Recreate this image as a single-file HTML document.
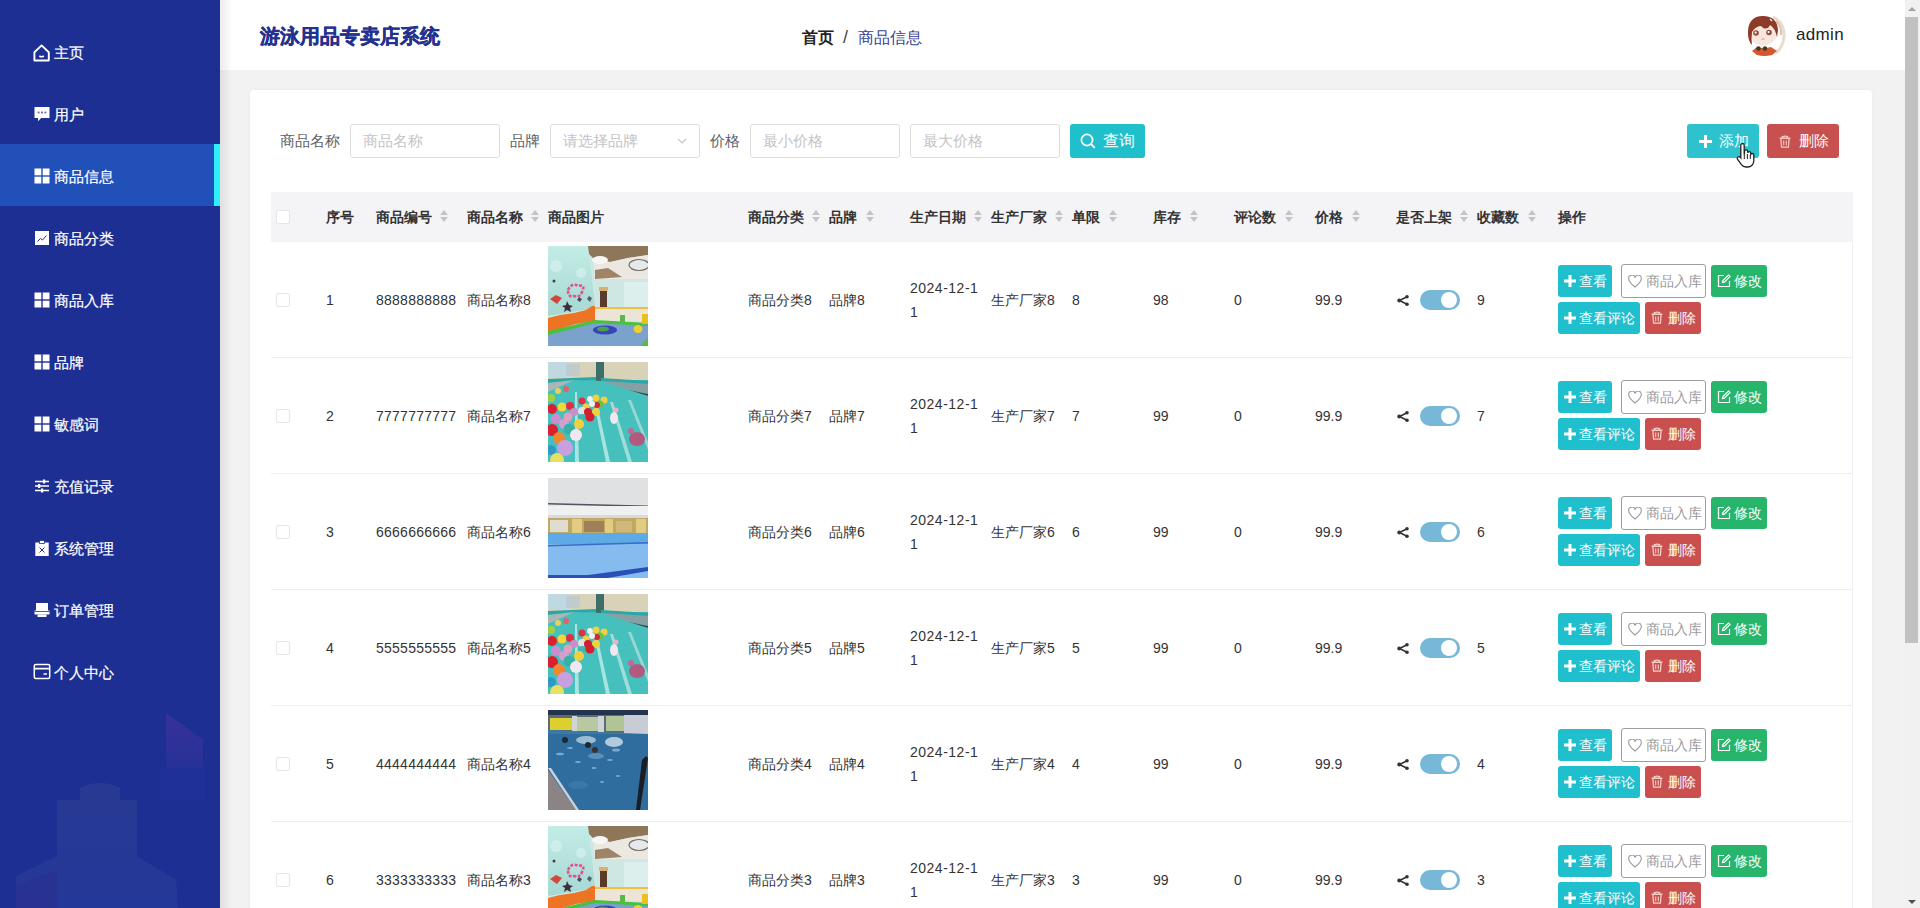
<!DOCTYPE html>
<html><head><meta charset="utf-8"><title>商品信息</title>
<style>
html,body{margin:0;padding:0}
body{width:1920px;height:908px;overflow:hidden;position:relative;background:#f2f2f3;font-family:"Liberation Sans",sans-serif;color:#333}
.main-bg{position:absolute;left:220px;top:70px;width:1685px;height:838px;background:#f2f2f3}
.sidebar{position:absolute;left:0;top:0;width:220px;height:908px;background:#1e2f94;overflow:hidden}
.deco{position:absolute;left:0;top:650px}
.mi{position:absolute;left:0;width:220px;height:62px;color:#fff;font-size:15px}
.mi.active{background:#2250b9}
.mi.active:after{content:"";position:absolute;right:0;top:0;width:6px;height:62px;background:#2ef0fb}
.mico{position:absolute;left:33px;top:23px;width:18px;height:18px}
.mico svg{display:block}
.mt{position:absolute;left:54px;top:22px;line-height:22px;white-space:nowrap;-webkit-text-stroke:.2px #fff}
.header{position:absolute;left:220px;top:0;width:1685px;height:70px;background:#fff}
.header:before{content:"";position:absolute;left:0;top:0;width:12px;height:908px;background:linear-gradient(90deg,rgba(0,0,0,.08),rgba(0,0,0,0))}
.title{position:absolute;left:40px;top:22px;font-size:20px;font-weight:bold;color:#24318f;-webkit-text-stroke:.4px #24318f;line-height:28px;white-space:nowrap}
.crumb{position:absolute;left:582px;top:26px;font-size:16px;line-height:24px;white-space:nowrap;color:#303133}
.crumb b{color:#222}
.crumb .sep{margin:0 10px 0 9px;color:#444;display:inline-block;font-size:18px;vertical-align:top;line-height:23px}
.crumb .cur{color:#3a3f96}
.avatar{position:absolute;left:1523px;top:13px}
.uname{position:absolute;left:1576px;top:24px;font-size:17px;line-height:22px;color:#222;letter-spacing:.35px}
.card{position:absolute;left:250px;top:90px;width:1622px;height:900px;background:#fff;border-radius:4px;box-shadow:0 0 6px rgba(0,0,0,.03)}
.lbl{position:absolute;top:40px;font-size:15px;line-height:22px;color:#606266;white-space:nowrap}
.inp{position:absolute;top:34px;height:32px;border:1px solid #dddddd;border-radius:3px;font-size:15px;line-height:32px;color:#c4c4c6;padding-left:12px;box-sizing:content-box;white-space:nowrap;width:136px}
.sel .arr{position:absolute;right:12px;top:13px}
.sbtn{position:absolute;top:34px;width:75px;height:34px;background:#1fbfcb;border-radius:3px;color:#fff;font-size:16px;line-height:34px;box-sizing:border-box;padding-left:33px;white-space:nowrap}
.sbtn svg{position:absolute;left:10px;top:9px}
.abtn{position:absolute;top:34px;width:72px;height:34px;border-radius:3px;color:#fff;font-size:15px;line-height:34px;box-sizing:border-box;padding-left:32px;white-space:nowrap}
.abtn svg{position:absolute;left:12px;top:11px}
.teal2{background:#2ec2ce}
.red2{background:#c8504e}
.table{position:absolute;left:271px;top:192px;width:1582px;height:716px}
.thead{position:absolute;left:-271px;top:0;width:1853px;height:50px;background:transparent}
.thead:before{content:"";position:absolute;left:271px;top:0;width:1582px;height:50px;background:#f4f4f6}
.h{position:absolute;top:14px;font-size:14px;font-weight:bold;line-height:22px;color:#333;white-space:nowrap}
.sort{position:absolute;top:18px;width:8px;height:14px}
.sort i{position:absolute;left:0;width:0;height:0;border-left:4px solid transparent;border-right:4px solid transparent}
.sort .up{top:0;border-bottom:5px solid #c4c4c8}
.sort .dn{top:7px;border-top:5px solid #c4c4c8}
.cb{position:absolute;width:12px;height:12px;border:1px solid #e4e6ea;background:#fff;border-radius:2px}
.row{position:absolute;left:-271px;width:1853px;height:116px}
.row .c{position:absolute;top:47px;font-size:14px;line-height:22px;color:#333;white-space:nowrap}
.row .date{top:34px;line-height:24px;letter-spacing:.5px}
.row .num{letter-spacing:.25px}
.pic{position:absolute;top:4px;width:100px;height:100px}
.pic{overflow:hidden}.pic svg{display:block;filter:blur(.5px)}
.bd{position:absolute;left:271px;top:115px;width:1582px;height:1px;background:#ebeef5}
.share{position:absolute}
.tg{position:absolute;width:40px;height:20px;border-radius:10px;background:#77b8d8}
.tg i{position:absolute;right:3px;top:2px;width:16px;height:16px;border-radius:50%;background:#fff}
.btn{position:absolute;height:32px;border-radius:3px;font-size:14px;line-height:32px;color:#fff;box-sizing:border-box;padding-left:21px;white-space:nowrap}
.btn .ico{position:absolute;left:6px;top:10px}
.teal{background:#1fbfce}
.green{background:#27b56c;padding-left:23px}
.red{background:#c9504e;padding-left:23px}
.outl{height:34px;line-height:32px;border:1px solid #9d9d9d;color:#9a9a9a;background:#fff;padding-left:24px}
.outl .ico{left:6px;top:10px}
.green .ico{left:6px;top:9px}
.red .ico{left:6px;top:9px}
.cursor{position:absolute;left:1736px;top:142px}
.sb{position:absolute;left:1905px;top:0;width:15px;height:908px;background:#f1f1f1}
.thumb{position:absolute;left:0px;top:17px;width:13px;height:626px;background:#c1c1c1}
.sbup{position:absolute;left:3px;top:7px}
.sbdn{position:absolute;left:3px;top:900px}

.vline{position:absolute;left:1852px;top:242px;width:1px;height:666px;background:#ebeef5}

</style></head><body>
<div class="main-bg"></div>
<div class="sidebar">
<svg class="deco" width="220" height="258" viewBox="0 0 220 258"><defs><linearGradient id="fg" x1="0" y1="0" x2="0" y2="1"><stop offset="0" stop-color="#43329e"/><stop offset="1" stop-color="#2a3396"/></linearGradient><linearGradient id="bg2" x1="0" y1="0" x2="0" y2="1"><stop offset="0" stop-color="#2a3c92"/><stop offset="1" stop-color="#263a9a"/></linearGradient></defs><path d="M80 150 L80 138 Q100 128 120 138 L120 150 L137 150 L137 206 L176 230 L178 258 L16 258 L16 226 L57 206 L57 150 Z" fill="url(#bg2)" opacity=".8"/><path d="M16 236 L57 220 L57 258 L16 258Z" fill="#2c2c8c" opacity=".5"/><path d="M166 63 L203 90 L203 118 L166 118 Z" fill="url(#fg)" opacity=".7"/><path d="M160 118 L205 118 L205 150 L160 150 Z" fill="#2236a0" opacity=".35"/></svg>
<div class="mi" style="top:20px"><span class="mico"><svg width="18" height="19" viewBox="0 0 18 19"><path d="M1.4 9.2L8.6 2.4l7.2 6.8V17.5H1.4z" stroke="#fff" stroke-width="1.9" fill="none" stroke-linejoin="round"/><path d="M6.3 13q2.3 1.5 4.6 0" stroke="#fff" stroke-width="1.7" fill="none"/></svg></span><span class="mt">主页</span></div><div class="mi" style="top:82px"><span class="mico"><svg width="18" height="18" viewBox="0 0 18 18"><path d="M1.5 2h15v11H8.2l-3.2 3.2V13H1.5z" fill="#fff"/><rect x="4.6" y="6.6" width="2" height="1.8" fill="#6a72a8"/><rect x="8" y="6.6" width="2" height="1.8" fill="#6a72a8"/><rect x="11.4" y="6.6" width="2" height="1.8" fill="#6a72a8"/></svg></span><span class="mt">用户</span></div><div class="mi active" style="top:144px"><span class="mico"><svg width="18" height="18" viewBox="0 0 18 18"><rect x="1.5" y="1.5" width="6.8" height="6.8" fill="#fff"/><rect x="9.7" y="1.5" width="6.8" height="6.8" fill="#fff"/><rect x="1.5" y="9.7" width="6.8" height="6.8" fill="#fff"/><rect x="9.7" y="9.7" width="6.8" height="6.8" fill="#fff"/></svg></span><span class="mt">商品信息</span></div><div class="mi" style="top:206px"><span class="mico"><svg width="18" height="18" viewBox="0 0 18 18"><rect x="2" y="2" width="14" height="14" fill="#fff"/><path d="M4.5 12.5l3-3 2 1.5 4-4.5" stroke="#1e2f94" stroke-width="1" fill="none"/></svg></span><span class="mt">商品分类</span></div><div class="mi" style="top:268px"><span class="mico"><svg width="18" height="18" viewBox="0 0 18 18"><rect x="1.5" y="1.5" width="6.8" height="6.8" fill="#fff"/><rect x="9.7" y="1.5" width="6.8" height="6.8" fill="#fff"/><rect x="1.5" y="9.7" width="6.8" height="6.8" fill="#fff"/><rect x="9.7" y="9.7" width="6.8" height="6.8" fill="#fff"/></svg></span><span class="mt">商品入库</span></div><div class="mi" style="top:330px"><span class="mico"><svg width="18" height="18" viewBox="0 0 18 18"><rect x="1.5" y="1.5" width="6.8" height="6.8" fill="#fff"/><rect x="9.7" y="1.5" width="6.8" height="6.8" fill="#fff"/><rect x="1.5" y="9.7" width="6.8" height="6.8" fill="#fff"/><rect x="9.7" y="9.7" width="6.8" height="6.8" fill="#fff"/></svg></span><span class="mt">品牌</span></div><div class="mi" style="top:392px"><span class="mico"><svg width="18" height="18" viewBox="0 0 18 18"><rect x="1.5" y="1.5" width="6.8" height="6.8" fill="#fff"/><rect x="9.7" y="1.5" width="6.8" height="6.8" fill="#fff"/><rect x="1.5" y="9.7" width="6.8" height="6.8" fill="#fff"/><rect x="9.7" y="9.7" width="6.8" height="6.8" fill="#fff"/></svg></span><span class="mt">敏感词</span></div><div class="mi" style="top:454px"><span class="mico"><svg width="18" height="18" viewBox="0 0 18 18"><path d="M2 4.5h14M2 9h14M2 13.5h14" stroke="#fff" stroke-width="1.6"/><rect x="10" y="2.5" width="2.2" height="4" fill="#fff"/><rect x="5" y="7" width="2.2" height="4" fill="#fff"/><rect x="8" y="11.5" width="2.2" height="4" fill="#fff"/></svg></span><span class="mt">充值记录</span></div><div class="mi" style="top:516px"><span class="mico"><svg width="18" height="18" viewBox="0 0 18 18"><path d="M2.3 3.5h13.4V17H2.3z" fill="#fff"/><rect x="6.5" y="1.5" width="5" height="3" fill="#fff" stroke="#1e2f94" stroke-width=".8"/><path d="M6.5 8.5l5 5M11.5 8.5l-5 5" stroke="#1e2f94" stroke-width="1"/></svg></span><span class="mt">系统管理</span></div><div class="mi" style="top:578px"><span class="mico"><svg width="18" height="18" viewBox="0 0 18 18"><path d="M3 2h12v8H3z" fill="#fff"/><path d="M1.5 9.5h15v4h-15z" fill="#fff"/><path d="M4.5 13.5h9V16h-9z" fill="#fff"/><path d="M1.5 10.5h15" stroke="#1e2f94" stroke-width=".8"/></svg></span><span class="mt">订单管理</span></div><div class="mi" style="top:640px"><span class="mico"><svg width="18" height="18" viewBox="0 0 18 18"><rect x="1.3" y="1.5" width="15.4" height="14" rx="1.5" stroke="#fff" stroke-width="1.5" fill="none"/><path d="M1.5 5.6h15M10.5 11h3.5" stroke="#fff" stroke-width="1.6"/></svg></span><span class="mt">个人中心</span></div>
</div>
<div class="header">
<div class="title">游泳用品专卖店系统</div>
<div class="crumb"><b>首页</b><span class="sep">/</span><span class="cur">商品信息</span></div>
<div class="avatar"><svg width="44" height="46" viewBox="0 0 44 46">
<path d="M30 4 Q42 10 41 24 Q40 34 33 40" stroke="#eadccc" stroke-width="3" fill="none"/>
<path d="M33 8 Q39 14 38 22" stroke="#d8a888" stroke-width="2" fill="none" opacity=".7"/>
<ellipse cx="20" cy="18" rx="15" ry="14.5" fill="#f6e8df"/>
<path d="M5 20 Q5 3 20 3 Q34 3 35 17 L34 24 Q32 15 27 12 Q25 17 20 15 Q19 13 17 13 Q12 14 9 19 Q8 26 9 32 Q5 28 5 20Z" fill="#8e3a28"/>
<path d="M27 6 L29 8" stroke="#f0d8d0" stroke-width="1.6"/>
<circle cx="13" cy="20" r="2.8" fill="#9a4a3a"/><circle cx="26" cy="19.5" r="2.8" fill="#9a4a3a"/>
<circle cx="12.6" cy="19.6" r="1.1" fill="#fff"/><circle cx="25.6" cy="19.1" r="1.1" fill="#fff"/>
<ellipse cx="20" cy="26" rx="2" ry="1.1" fill="#e8b8a8"/>
<path d="M9 38 L14 34 Q21 36 28 34 L34 38 L29 42 Q21 44 14 42Z" fill="#d4582e"/>
<circle cx="15.5" cy="35.5" r="2.2" fill="#3a3a30"/><circle cx="22" cy="35.5" r="2.2" fill="#3a3a30"/>
</svg></div>
<div class="uname">admin</div>
</div>
<div class="card">
<span class="lbl" style="left:30px">商品名称</span>
<span class="inp" style="left:100px">商品名称</span>
<span class="lbl" style="left:260px">品牌</span>
<span class="inp sel" style="left:300px">请选择品牌<svg class="arr" width="10" height="6" viewBox="0 0 10 6"><path d="M1 1l4 4 4-4" stroke="#c0c4cc" stroke-width="1.1" fill="none"/></svg></span>
<span class="lbl" style="left:460px">价格</span>
<span class="inp" style="left:500px">最小价格</span>
<span class="inp" style="left:660px">最大价格</span>
<span class="sbtn" style="left:820px"><svg width="16" height="16" viewBox="0 0 16 16"><circle cx="7" cy="7" r="5.6" stroke="#fff" stroke-width="1.7" fill="none"/><path d="M11 11l3.8 3.8" stroke="#fff" stroke-width="1.8"/></svg>查询</span>
<span class="abtn teal2" style="left:1437px"><svg width="13" height="13" viewBox="0 0 13 13"><path d="M5 0h3v5h5v3H8v5H5V8H0V5h5z" fill="#fff"/></svg>添加</span>
<span class="abtn red2" style="left:1517px"><svg class="ico" width="12" height="13" viewBox="0 0 12 13"><path d="M.6 3.3h10.8M3.4 3.2V1.7Q6 .5 8.6 1.7v1.5" stroke="#f6c8c0" stroke-width="1.4" fill="none"/><path d="M1.9 3.6l.7 8.6h6.8l.7-8.6" stroke="#f6c8c0" stroke-width="1.3" fill="none"/><path d="M4.7 5.6v4.6M7.3 5.6v4.6" stroke="#f6c8c0" stroke-width="1.1"/></svg>删除</span>
</div>
<div class="table">
<div class="thead"><span class="cb" style="left:276px;top:18px"></span><span class="h" style="left:326px">序号</span><span class="h" style="left:376px">商品编号</span><span class="sort" style="left:440px"><i class="up"></i><i class="dn"></i></span><span class="h" style="left:467px">商品名称</span><span class="sort" style="left:531px"><i class="up"></i><i class="dn"></i></span><span class="h" style="left:548px">商品图片</span><span class="h" style="left:748px">商品分类</span><span class="sort" style="left:812px"><i class="up"></i><i class="dn"></i></span><span class="h" style="left:829px">品牌</span><span class="sort" style="left:866px"><i class="up"></i><i class="dn"></i></span><span class="h" style="left:910px">生产日期</span><span class="sort" style="left:974px"><i class="up"></i><i class="dn"></i></span><span class="h" style="left:991px">生产厂家</span><span class="sort" style="left:1055px"><i class="up"></i><i class="dn"></i></span><span class="h" style="left:1072px">单限</span><span class="sort" style="left:1109px"><i class="up"></i><i class="dn"></i></span><span class="h" style="left:1153px">库存</span><span class="sort" style="left:1190px"><i class="up"></i><i class="dn"></i></span><span class="h" style="left:1234px">评论数</span><span class="sort" style="left:1285px"><i class="up"></i><i class="dn"></i></span><span class="h" style="left:1315px">价格</span><span class="sort" style="left:1352px"><i class="up"></i><i class="dn"></i></span><span class="h" style="left:1396px">是否上架</span><span class="sort" style="left:1460px"><i class="up"></i><i class="dn"></i></span><span class="h" style="left:1477px">收藏数</span><span class="sort" style="left:1528px"><i class="up"></i><i class="dn"></i></span><span class="h" style="left:1558px">操作</span></div>
<div class="row" style="top:50px">
<span class="cb" style="left:276px;top:51px"></span>
<span class="c" style="left:326px">1</span>
<span class="c num" style="left:376px">8888888888</span>
<span class="c" style="left:467px">商品名称8</span>
<span class="pic" style="left:548px"><svg width="100" height="100" viewBox="0 0 100 100">
<defs><linearGradient id="wA" x1="0" y1="0" x2="0" y2="1"><stop offset="0" stop-color="#c4ece6"/><stop offset="1" stop-color="#a6d8d2"/></linearGradient></defs>
<rect width="100" height="100" fill="#d0e8e4"/>
<polygon points="33,0 100,0 100,9 80,12 62,16 46,13 38,5" fill="#8e7658"/>
<polygon points="46,13 62,16 80,12 100,9 100,34 47,36" fill="#ebe8e2"/>
<ellipse cx="52" cy="14" rx="8" ry="4" fill="#f6f6f4"/>
<polygon points="47,24 60,22 74,31 47,33" fill="#a08468"/>
<ellipse cx="91" cy="19" rx="10" ry="5.5" fill="#e4eaec" stroke="#7a6a5a" stroke-width="1.2"/>
<rect x="47" y="33" width="53" height="30" fill="#cfe7e3"/>
<rect x="76" y="36" width="24" height="26" fill="#dcefed"/>
<rect x="52" y="44" width="7" height="19" fill="#5a3a2a"/>
<rect x="51" y="41" width="9" height="4" fill="#d8b070"/>
<path d="M0 0 H40 Q44 30 47 60 L47 62 L0 70Z" fill="url(#wA)"/>
<polygon points="0,72 12,69 26,67 38,64 44,60 47,60 47,75 28,78 0,86" fill="#ec7424"/>
<rect x="47" y="61" width="53" height="14" fill="#ece4d6"/>
<rect x="47" y="61" width="53" height="2" fill="#f0c040"/>
<polygon points="0,86 47,75 100,78 100,100 0,100" fill="#7aa2cc"/>
<polygon points="0,85 47,74 100,77 100,80 47,77 0,89" fill="#48c040"/>
<rect x="72" y="69" width="5" height="8" fill="#58b848"/>
<rect x="94" y="68" width="6" height="10" fill="#e8c020"/>
<ellipse cx="57" cy="84" rx="12" ry="4.5" fill="#3a44b8"/>
<ellipse cx="55" cy="83" rx="6" ry="2.5" fill="#4aa050"/>
<ellipse cx="90" cy="83" rx="4.5" ry="4" fill="#f0d030"/>
<polygon points="94,98 100,92 100,100 92,100" fill="#50c040"/>
<path d="M2 53 L8 49 L14 52 L9 58Z" fill="#d04838"/>
<polygon points="19,55 21,59 25,60 22,62 23,66 19,64 16,66 17,62 14,60 18,59" fill="#3a3040"/>
<path d="M20 44 Q24 36 30 40 Q38 38 34 46 Q32 52 26 50 Q20 52 20 44Z" fill="none" stroke="#e4508a" stroke-width="2.6" stroke-dasharray="3 1.5"/>
<circle cx="6" cy="35" r="1.5" fill="#404050"/><polygon points="31,51 34,53 32,56 29,54" fill="#405060"/><polygon points="41,50 44,52 42,56 39,53" fill="#506070"/>
<circle cx="8" cy="20" r="6" fill="#dcf4f2" opacity=".6"/><circle cx="33" cy="27" r="5" fill="#dcf4f2" opacity=".6"/>
</svg></span>
<span class="c" style="left:748px">商品分类8</span>
<span class="c" style="left:829px">品牌8</span>
<span class="c date" style="left:910px">2024-12-1<br>1</span>
<span class="c" style="left:991px">生产厂家8</span>
<span class="c" style="left:1072px">8</span>
<span class="c" style="left:1153px">98</span>
<span class="c" style="left:1234px">0</span>
<span class="c" style="left:1315px">99.9</span>
<svg class="share" style="left:1397px;top:53px" width="12" height="11" viewBox="0 0 12 11"><path d="M10 1.8L2.5 5.5 10 9.2" stroke="#333" stroke-width="1.6" fill="none"/><circle cx="10" cy="1.8" r="1.8" fill="#333"/><circle cx="2.2" cy="5.5" r="1.9" fill="#333"/><circle cx="10" cy="9.2" r="1.8" fill="#333"/></svg>
<span class="tg" style="left:1420px;top:48px"><i></i></span>
<span class="c" style="left:1477px">9</span>
<span class="btn teal" style="left:1558px;top:23px;width:54px"><svg class="ico" width="12" height="12" viewBox="0 0 12 12"><path d="M4.5 0h3v4.5H12v3H7.5V12h-3V7.5H0v-3h4.5z" fill="#fff"/></svg>查看</span>
<span class="btn outl" style="left:1621px;top:22px;width:85px"><svg class="ico" width="14" height="13" viewBox="0 0 14 13"><path d="M7 12C2 8 .8 6 .8 4A3 3 0 0 1 7 2.5 3 3 0 0 1 13.2 4c0 2-1.2 4-6.2 8z" stroke="#9a9a9a" stroke-width="1.1" fill="none"/></svg>商品入库</span>
<span class="btn green" style="left:1711px;top:23px;width:56px"><svg class="ico" width="14" height="14" viewBox="0 0 14 14"><path d="M7 1.5H1.5v11h11V7M5.5 8.5l.4-2L11.5 1l1.5 1.5-5.6 5.6z" stroke="#fff" stroke-width="1.2" fill="none"/></svg>修改</span>
<span class="btn teal" style="left:1558px;top:60px;width:82px"><svg class="ico" width="12" height="12" viewBox="0 0 12 12"><path d="M4.5 0h3v4.5H12v3H7.5V12h-3V7.5H0v-3h4.5z" fill="#fff"/></svg>查看评论</span>
<span class="btn red" style="left:1645px;top:60px;width:56px"><svg class="ico" width="12" height="13" viewBox="0 0 12 13"><path d="M.6 3.3h10.8M3.4 3.2V1.7Q6 .5 8.6 1.7v1.5" stroke="#f8cdc6" stroke-width="1.4" fill="none"/><path d="M1.9 3.6l.7 8.6h6.8l.7-8.6" stroke="#f8cdc6" stroke-width="1.3" fill="none"/><path d="M4.7 5.6v4.6M7.3 5.6v4.6" stroke="#f8cdc6" stroke-width="1.1"/></svg>删除</span>
<div class="bd"></div>
</div><div class="row" style="top:166px">
<span class="cb" style="left:276px;top:51px"></span>
<span class="c" style="left:326px">2</span>
<span class="c num" style="left:376px">7777777777</span>
<span class="c" style="left:467px">商品名称7</span>
<span class="pic" style="left:548px"><svg width="100" height="100" viewBox="0 0 100 100">
<rect width="100" height="100" fill="#3cbab6"/>
<rect x="0" y="0" width="100" height="18" fill="#d8d2b8"/>
<rect x="0" y="0" width="22" height="16" fill="#c0d8e0"/>
<rect x="18" y="2" width="14" height="12" fill="#b8c8d0" opacity=".7"/>
<rect x="48" y="0" width="8" height="22" fill="#3e6e6a"/>
<polygon points="0,17 48,15 48,18 0,21" fill="#2aa8a8"/>
<polygon points="53,16 100,19 100,22 53,19" fill="#2aa8a8"/>
<polygon points="0,21 26,18 20,24 0,30" fill="#a8b8b8"/>
<polygon points="53,19 100,22 100,32 80,28 53,22" fill="#88a0a4"/>
<polygon points="80,28 100,32 100,34 80,30" fill="#3a4a50"/>
<polygon points="0,30 26,18 53,19 100,34 100,100 0,100" fill="#45c0bc"/>
<polygon points="27,30 29,30 31,100 27,100" fill="#a8e4e0"/>
<polygon points="47,46 50,46 62,100 58,100" fill="#a8e4e0"/>
<polygon points="62,40 65,40 84,100 80,100" fill="#a0dcd8"/>
<polygon points="80,38 83,38 100,80 100,88" fill="#98d8d4"/>
<circle cx="3" cy="36" r="4" fill="#a0d040"/>
<circle cx="18" cy="27" r="3" fill="#e06070"/><circle cx="10" cy="29" r="3" fill="#e8d060"/>
<circle cx="34" cy="39" r="3.5" fill="#e03040"/><circle cx="42" cy="37" r="3" fill="#f0f0f0"/><circle cx="48" cy="36" r="3.5" fill="#f0d040"/><circle cx="56" cy="38" r="3.5" fill="#f0d040"/><circle cx="52" cy="42" r="3.5" fill="#70c040"/><circle cx="38" cy="45" r="3.5" fill="#f0d040"/><circle cx="49" cy="43" r="3" fill="#d02838"/><circle cx="44" cy="42" r="3" fill="#f0f0f0"/>
<circle cx="4" cy="47" r="5" fill="#d82030"/><circle cx="14" cy="45" r="4.5" fill="#f0d838"/><circle cx="22" cy="44" r="4" fill="#e03040"/><circle cx="26" cy="50" r="4" fill="#c890c8"/><circle cx="34" cy="49" r="4" fill="#e8e0e8"/><circle cx="40" cy="50" r="4" fill="#d02030"/><circle cx="48" cy="50" r="4" fill="#f0d040"/><circle cx="34" cy="56" r="4" fill="#40b8b0"/><circle cx="42" cy="55" r="4.5" fill="#d02030"/>
<circle cx="8" cy="57" r="5" fill="#c890d0"/><circle cx="20" cy="55" r="4.5" fill="#e0a0c0"/><circle cx="16" cy="62" r="5" fill="#d0a0d0"/><circle cx="31" cy="62" r="5" fill="#f0d040"/>
<circle cx="4" cy="68" r="6" fill="#d82030"/><circle cx="21" cy="67" r="5.5" fill="#38b0a8"/><circle cx="28" cy="73" r="6" fill="#f0e8f0"/><circle cx="11" cy="76" r="6" fill="#f08830"/>
<circle cx="17" cy="86" r="8" fill="#c8a0e0"/><circle cx="3" cy="88" r="5" fill="#3098c8"/><circle cx="9" cy="98" r="7" fill="#e8e060"/>
<ellipse cx="66" cy="56" rx="4" ry="6" fill="#f0e8f0"/><circle cx="68" cy="48" r="2.5" fill="#f0b0c0"/>
<ellipse cx="89" cy="77" rx="8" ry="7" fill="#b05a80"/><ellipse cx="83" cy="69" rx="3" ry="3" fill="#c06890"/>
</svg></span>
<span class="c" style="left:748px">商品分类7</span>
<span class="c" style="left:829px">品牌7</span>
<span class="c date" style="left:910px">2024-12-1<br>1</span>
<span class="c" style="left:991px">生产厂家7</span>
<span class="c" style="left:1072px">7</span>
<span class="c" style="left:1153px">99</span>
<span class="c" style="left:1234px">0</span>
<span class="c" style="left:1315px">99.9</span>
<svg class="share" style="left:1397px;top:53px" width="12" height="11" viewBox="0 0 12 11"><path d="M10 1.8L2.5 5.5 10 9.2" stroke="#333" stroke-width="1.6" fill="none"/><circle cx="10" cy="1.8" r="1.8" fill="#333"/><circle cx="2.2" cy="5.5" r="1.9" fill="#333"/><circle cx="10" cy="9.2" r="1.8" fill="#333"/></svg>
<span class="tg" style="left:1420px;top:48px"><i></i></span>
<span class="c" style="left:1477px">7</span>
<span class="btn teal" style="left:1558px;top:23px;width:54px"><svg class="ico" width="12" height="12" viewBox="0 0 12 12"><path d="M4.5 0h3v4.5H12v3H7.5V12h-3V7.5H0v-3h4.5z" fill="#fff"/></svg>查看</span>
<span class="btn outl" style="left:1621px;top:22px;width:85px"><svg class="ico" width="14" height="13" viewBox="0 0 14 13"><path d="M7 12C2 8 .8 6 .8 4A3 3 0 0 1 7 2.5 3 3 0 0 1 13.2 4c0 2-1.2 4-6.2 8z" stroke="#9a9a9a" stroke-width="1.1" fill="none"/></svg>商品入库</span>
<span class="btn green" style="left:1711px;top:23px;width:56px"><svg class="ico" width="14" height="14" viewBox="0 0 14 14"><path d="M7 1.5H1.5v11h11V7M5.5 8.5l.4-2L11.5 1l1.5 1.5-5.6 5.6z" stroke="#fff" stroke-width="1.2" fill="none"/></svg>修改</span>
<span class="btn teal" style="left:1558px;top:60px;width:82px"><svg class="ico" width="12" height="12" viewBox="0 0 12 12"><path d="M4.5 0h3v4.5H12v3H7.5V12h-3V7.5H0v-3h4.5z" fill="#fff"/></svg>查看评论</span>
<span class="btn red" style="left:1645px;top:60px;width:56px"><svg class="ico" width="12" height="13" viewBox="0 0 12 13"><path d="M.6 3.3h10.8M3.4 3.2V1.7Q6 .5 8.6 1.7v1.5" stroke="#f8cdc6" stroke-width="1.4" fill="none"/><path d="M1.9 3.6l.7 8.6h6.8l.7-8.6" stroke="#f8cdc6" stroke-width="1.3" fill="none"/><path d="M4.7 5.6v4.6M7.3 5.6v4.6" stroke="#f8cdc6" stroke-width="1.1"/></svg>删除</span>
<div class="bd"></div>
</div><div class="row" style="top:282px">
<span class="cb" style="left:276px;top:51px"></span>
<span class="c" style="left:326px">3</span>
<span class="c num" style="left:376px">6666666666</span>
<span class="c" style="left:467px">商品名称6</span>
<span class="pic" style="left:548px"><svg width="100" height="100" viewBox="0 0 100 100">
<rect width="100" height="100" fill="#e4e5e6"/>
<rect x="0" y="0" width="100" height="26" fill="#e0e1e2"/>
<polygon points="0,25 100,27.5 100,29 0,26.5" fill="#50545c"/>
<rect x="0" y="28" width="100" height="12" fill="#eff0f0"/>
<rect x="0" y="37" width="100" height="3" fill="#dadada"/>
<rect x="0" y="40" width="100" height="15" fill="#c0a868"/>
<rect x="2" y="42" width="18" height="12" fill="#e0dcd0"/>
<rect x="24" y="41" width="10" height="14" fill="#e2cc80"/>
<rect x="36" y="43" width="20" height="11" fill="#a08058"/>
<rect x="57" y="41" width="8" height="14" fill="#e2cc80"/>
<rect x="68" y="43" width="16" height="11" fill="#d0b878"/>
<rect x="88" y="41" width="10" height="14" fill="#e2cc80"/>
<rect x="0" y="55" width="100" height="45" fill="#84bcf0"/>
<rect x="0" y="55" width="100" height="11" fill="#5eaae6"/>
<polygon points="0,67 100,64 100,65.5 0,68.5" fill="#3a6cc4"/>
<polygon points="0,97 40,97 100,89 100,93 60,100 0,100" fill="#2a50b8"/>
</svg></span>
<span class="c" style="left:748px">商品分类6</span>
<span class="c" style="left:829px">品牌6</span>
<span class="c date" style="left:910px">2024-12-1<br>1</span>
<span class="c" style="left:991px">生产厂家6</span>
<span class="c" style="left:1072px">6</span>
<span class="c" style="left:1153px">99</span>
<span class="c" style="left:1234px">0</span>
<span class="c" style="left:1315px">99.9</span>
<svg class="share" style="left:1397px;top:53px" width="12" height="11" viewBox="0 0 12 11"><path d="M10 1.8L2.5 5.5 10 9.2" stroke="#333" stroke-width="1.6" fill="none"/><circle cx="10" cy="1.8" r="1.8" fill="#333"/><circle cx="2.2" cy="5.5" r="1.9" fill="#333"/><circle cx="10" cy="9.2" r="1.8" fill="#333"/></svg>
<span class="tg" style="left:1420px;top:48px"><i></i></span>
<span class="c" style="left:1477px">6</span>
<span class="btn teal" style="left:1558px;top:23px;width:54px"><svg class="ico" width="12" height="12" viewBox="0 0 12 12"><path d="M4.5 0h3v4.5H12v3H7.5V12h-3V7.5H0v-3h4.5z" fill="#fff"/></svg>查看</span>
<span class="btn outl" style="left:1621px;top:22px;width:85px"><svg class="ico" width="14" height="13" viewBox="0 0 14 13"><path d="M7 12C2 8 .8 6 .8 4A3 3 0 0 1 7 2.5 3 3 0 0 1 13.2 4c0 2-1.2 4-6.2 8z" stroke="#9a9a9a" stroke-width="1.1" fill="none"/></svg>商品入库</span>
<span class="btn green" style="left:1711px;top:23px;width:56px"><svg class="ico" width="14" height="14" viewBox="0 0 14 14"><path d="M7 1.5H1.5v11h11V7M5.5 8.5l.4-2L11.5 1l1.5 1.5-5.6 5.6z" stroke="#fff" stroke-width="1.2" fill="none"/></svg>修改</span>
<span class="btn teal" style="left:1558px;top:60px;width:82px"><svg class="ico" width="12" height="12" viewBox="0 0 12 12"><path d="M4.5 0h3v4.5H12v3H7.5V12h-3V7.5H0v-3h4.5z" fill="#fff"/></svg>查看评论</span>
<span class="btn red" style="left:1645px;top:60px;width:56px"><svg class="ico" width="12" height="13" viewBox="0 0 12 13"><path d="M.6 3.3h10.8M3.4 3.2V1.7Q6 .5 8.6 1.7v1.5" stroke="#f8cdc6" stroke-width="1.4" fill="none"/><path d="M1.9 3.6l.7 8.6h6.8l.7-8.6" stroke="#f8cdc6" stroke-width="1.3" fill="none"/><path d="M4.7 5.6v4.6M7.3 5.6v4.6" stroke="#f8cdc6" stroke-width="1.1"/></svg>删除</span>
<div class="bd"></div>
</div><div class="row" style="top:398px">
<span class="cb" style="left:276px;top:51px"></span>
<span class="c" style="left:326px">4</span>
<span class="c num" style="left:376px">5555555555</span>
<span class="c" style="left:467px">商品名称5</span>
<span class="pic" style="left:548px"><svg width="100" height="100" viewBox="0 0 100 100">
<rect width="100" height="100" fill="#3cbab6"/>
<rect x="0" y="0" width="100" height="18" fill="#d8d2b8"/>
<rect x="0" y="0" width="22" height="16" fill="#c0d8e0"/>
<rect x="18" y="2" width="14" height="12" fill="#b8c8d0" opacity=".7"/>
<rect x="48" y="0" width="8" height="22" fill="#3e6e6a"/>
<polygon points="0,17 48,15 48,18 0,21" fill="#2aa8a8"/>
<polygon points="53,16 100,19 100,22 53,19" fill="#2aa8a8"/>
<polygon points="0,21 26,18 20,24 0,30" fill="#a8b8b8"/>
<polygon points="53,19 100,22 100,32 80,28 53,22" fill="#88a0a4"/>
<polygon points="80,28 100,32 100,34 80,30" fill="#3a4a50"/>
<polygon points="0,30 26,18 53,19 100,34 100,100 0,100" fill="#45c0bc"/>
<polygon points="27,30 29,30 31,100 27,100" fill="#a8e4e0"/>
<polygon points="47,46 50,46 62,100 58,100" fill="#a8e4e0"/>
<polygon points="62,40 65,40 84,100 80,100" fill="#a0dcd8"/>
<polygon points="80,38 83,38 100,80 100,88" fill="#98d8d4"/>
<circle cx="3" cy="36" r="4" fill="#a0d040"/>
<circle cx="18" cy="27" r="3" fill="#e06070"/><circle cx="10" cy="29" r="3" fill="#e8d060"/>
<circle cx="34" cy="39" r="3.5" fill="#e03040"/><circle cx="42" cy="37" r="3" fill="#f0f0f0"/><circle cx="48" cy="36" r="3.5" fill="#f0d040"/><circle cx="56" cy="38" r="3.5" fill="#f0d040"/><circle cx="52" cy="42" r="3.5" fill="#70c040"/><circle cx="38" cy="45" r="3.5" fill="#f0d040"/><circle cx="49" cy="43" r="3" fill="#d02838"/><circle cx="44" cy="42" r="3" fill="#f0f0f0"/>
<circle cx="4" cy="47" r="5" fill="#d82030"/><circle cx="14" cy="45" r="4.5" fill="#f0d838"/><circle cx="22" cy="44" r="4" fill="#e03040"/><circle cx="26" cy="50" r="4" fill="#c890c8"/><circle cx="34" cy="49" r="4" fill="#e8e0e8"/><circle cx="40" cy="50" r="4" fill="#d02030"/><circle cx="48" cy="50" r="4" fill="#f0d040"/><circle cx="34" cy="56" r="4" fill="#40b8b0"/><circle cx="42" cy="55" r="4.5" fill="#d02030"/>
<circle cx="8" cy="57" r="5" fill="#c890d0"/><circle cx="20" cy="55" r="4.5" fill="#e0a0c0"/><circle cx="16" cy="62" r="5" fill="#d0a0d0"/><circle cx="31" cy="62" r="5" fill="#f0d040"/>
<circle cx="4" cy="68" r="6" fill="#d82030"/><circle cx="21" cy="67" r="5.5" fill="#38b0a8"/><circle cx="28" cy="73" r="6" fill="#f0e8f0"/><circle cx="11" cy="76" r="6" fill="#f08830"/>
<circle cx="17" cy="86" r="8" fill="#c8a0e0"/><circle cx="3" cy="88" r="5" fill="#3098c8"/><circle cx="9" cy="98" r="7" fill="#e8e060"/>
<ellipse cx="66" cy="56" rx="4" ry="6" fill="#f0e8f0"/><circle cx="68" cy="48" r="2.5" fill="#f0b0c0"/>
<ellipse cx="89" cy="77" rx="8" ry="7" fill="#b05a80"/><ellipse cx="83" cy="69" rx="3" ry="3" fill="#c06890"/>
</svg></span>
<span class="c" style="left:748px">商品分类5</span>
<span class="c" style="left:829px">品牌5</span>
<span class="c date" style="left:910px">2024-12-1<br>1</span>
<span class="c" style="left:991px">生产厂家5</span>
<span class="c" style="left:1072px">5</span>
<span class="c" style="left:1153px">99</span>
<span class="c" style="left:1234px">0</span>
<span class="c" style="left:1315px">99.9</span>
<svg class="share" style="left:1397px;top:53px" width="12" height="11" viewBox="0 0 12 11"><path d="M10 1.8L2.5 5.5 10 9.2" stroke="#333" stroke-width="1.6" fill="none"/><circle cx="10" cy="1.8" r="1.8" fill="#333"/><circle cx="2.2" cy="5.5" r="1.9" fill="#333"/><circle cx="10" cy="9.2" r="1.8" fill="#333"/></svg>
<span class="tg" style="left:1420px;top:48px"><i></i></span>
<span class="c" style="left:1477px">5</span>
<span class="btn teal" style="left:1558px;top:23px;width:54px"><svg class="ico" width="12" height="12" viewBox="0 0 12 12"><path d="M4.5 0h3v4.5H12v3H7.5V12h-3V7.5H0v-3h4.5z" fill="#fff"/></svg>查看</span>
<span class="btn outl" style="left:1621px;top:22px;width:85px"><svg class="ico" width="14" height="13" viewBox="0 0 14 13"><path d="M7 12C2 8 .8 6 .8 4A3 3 0 0 1 7 2.5 3 3 0 0 1 13.2 4c0 2-1.2 4-6.2 8z" stroke="#9a9a9a" stroke-width="1.1" fill="none"/></svg>商品入库</span>
<span class="btn green" style="left:1711px;top:23px;width:56px"><svg class="ico" width="14" height="14" viewBox="0 0 14 14"><path d="M7 1.5H1.5v11h11V7M5.5 8.5l.4-2L11.5 1l1.5 1.5-5.6 5.6z" stroke="#fff" stroke-width="1.2" fill="none"/></svg>修改</span>
<span class="btn teal" style="left:1558px;top:60px;width:82px"><svg class="ico" width="12" height="12" viewBox="0 0 12 12"><path d="M4.5 0h3v4.5H12v3H7.5V12h-3V7.5H0v-3h4.5z" fill="#fff"/></svg>查看评论</span>
<span class="btn red" style="left:1645px;top:60px;width:56px"><svg class="ico" width="12" height="13" viewBox="0 0 12 13"><path d="M.6 3.3h10.8M3.4 3.2V1.7Q6 .5 8.6 1.7v1.5" stroke="#f8cdc6" stroke-width="1.4" fill="none"/><path d="M1.9 3.6l.7 8.6h6.8l.7-8.6" stroke="#f8cdc6" stroke-width="1.3" fill="none"/><path d="M4.7 5.6v4.6M7.3 5.6v4.6" stroke="#f8cdc6" stroke-width="1.1"/></svg>删除</span>
<div class="bd"></div>
</div><div class="row" style="top:514px">
<span class="cb" style="left:276px;top:51px"></span>
<span class="c" style="left:326px">5</span>
<span class="c num" style="left:376px">4444444444</span>
<span class="c" style="left:467px">商品名称4</span>
<span class="pic" style="left:548px"><svg width="100" height="100" viewBox="0 0 100 100">
<rect width="100" height="100" fill="#2e6a9a"/>
<rect x="0" y="0" width="100" height="24" fill="#5a6a78"/>
<rect x="0" y="0" width="100" height="5" fill="#22344e"/>
<rect x="2" y="8" width="22" height="12" fill="#dcd030"/>
<rect x="28" y="7" width="22" height="14" fill="#b8c8a0"/>
<rect x="24" y="6" width="5" height="16" fill="#d0d4d8"/>
<rect x="50" y="6" width="6" height="16" fill="#d0d4d8"/>
<rect x="58" y="6" width="18" height="15" fill="#b0c498"/>
<rect x="76" y="5" width="24" height="21" fill="#c8ccd4"/>
<polygon points="0,20 100,24 100,28 0,24" fill="#3a7aa8"/>
<rect x="0" y="24" width="100" height="76" fill="#2f6d9e"/>
<polygon points="0,60 28,100 0,100" fill="#8a8484"/>
<polygon points="0,58 3,58 31,100 28,100" fill="#c8d0d8"/>
<ellipse cx="38" cy="30" rx="10" ry="4" fill="#b8d0e0" opacity=".8"/>
<ellipse cx="66" cy="32" rx="9" ry="5" fill="#c8dce8" opacity=".85"/>
<ellipse cx="48" cy="46" rx="8" ry="3" fill="#6aa0c8" opacity=".7"/>
<circle cx="17" cy="30" r="3" fill="#1a2a34"/><circle cx="40" cy="35" r="3" fill="#1a2a34"/><circle cx="47" cy="40" r="3" fill="#3a3030"/>
<polygon points="94,50 98,46 100,48 92,100 88,100" fill="#1a1e24"/>
<ellipse cx="30" cy="75" rx="10" ry="4" fill="#4a82b0" opacity=".5"/>
<g fill="#9cc4e0" opacity=".7"><ellipse cx="12" cy="44" rx="4" ry="1.2"/><ellipse cx="30" cy="52" rx="3" ry="1"/><ellipse cx="62" cy="50" rx="3" ry="1"/><ellipse cx="46" cy="58" rx="2.5" ry="1"/><ellipse cx="70" cy="66" rx="2" ry=".9"/><ellipse cx="54" cy="72" rx="2" ry=".9"/><ellipse cx="22" cy="38" rx="3" ry="1"/><ellipse cx="68" cy="40" rx="4" ry="1.5"/></g>
</svg></span>
<span class="c" style="left:748px">商品分类4</span>
<span class="c" style="left:829px">品牌4</span>
<span class="c date" style="left:910px">2024-12-1<br>1</span>
<span class="c" style="left:991px">生产厂家4</span>
<span class="c" style="left:1072px">4</span>
<span class="c" style="left:1153px">99</span>
<span class="c" style="left:1234px">0</span>
<span class="c" style="left:1315px">99.9</span>
<svg class="share" style="left:1397px;top:53px" width="12" height="11" viewBox="0 0 12 11"><path d="M10 1.8L2.5 5.5 10 9.2" stroke="#333" stroke-width="1.6" fill="none"/><circle cx="10" cy="1.8" r="1.8" fill="#333"/><circle cx="2.2" cy="5.5" r="1.9" fill="#333"/><circle cx="10" cy="9.2" r="1.8" fill="#333"/></svg>
<span class="tg" style="left:1420px;top:48px"><i></i></span>
<span class="c" style="left:1477px">4</span>
<span class="btn teal" style="left:1558px;top:23px;width:54px"><svg class="ico" width="12" height="12" viewBox="0 0 12 12"><path d="M4.5 0h3v4.5H12v3H7.5V12h-3V7.5H0v-3h4.5z" fill="#fff"/></svg>查看</span>
<span class="btn outl" style="left:1621px;top:22px;width:85px"><svg class="ico" width="14" height="13" viewBox="0 0 14 13"><path d="M7 12C2 8 .8 6 .8 4A3 3 0 0 1 7 2.5 3 3 0 0 1 13.2 4c0 2-1.2 4-6.2 8z" stroke="#9a9a9a" stroke-width="1.1" fill="none"/></svg>商品入库</span>
<span class="btn green" style="left:1711px;top:23px;width:56px"><svg class="ico" width="14" height="14" viewBox="0 0 14 14"><path d="M7 1.5H1.5v11h11V7M5.5 8.5l.4-2L11.5 1l1.5 1.5-5.6 5.6z" stroke="#fff" stroke-width="1.2" fill="none"/></svg>修改</span>
<span class="btn teal" style="left:1558px;top:60px;width:82px"><svg class="ico" width="12" height="12" viewBox="0 0 12 12"><path d="M4.5 0h3v4.5H12v3H7.5V12h-3V7.5H0v-3h4.5z" fill="#fff"/></svg>查看评论</span>
<span class="btn red" style="left:1645px;top:60px;width:56px"><svg class="ico" width="12" height="13" viewBox="0 0 12 13"><path d="M.6 3.3h10.8M3.4 3.2V1.7Q6 .5 8.6 1.7v1.5" stroke="#f8cdc6" stroke-width="1.4" fill="none"/><path d="M1.9 3.6l.7 8.6h6.8l.7-8.6" stroke="#f8cdc6" stroke-width="1.3" fill="none"/><path d="M4.7 5.6v4.6M7.3 5.6v4.6" stroke="#f8cdc6" stroke-width="1.1"/></svg>删除</span>
<div class="bd"></div>
</div><div class="row" style="top:630px">
<span class="cb" style="left:276px;top:51px"></span>
<span class="c" style="left:326px">6</span>
<span class="c num" style="left:376px">3333333333</span>
<span class="c" style="left:467px">商品名称3</span>
<span class="pic" style="left:548px"><svg width="100" height="100" viewBox="0 0 100 100">
<defs><linearGradient id="wA" x1="0" y1="0" x2="0" y2="1"><stop offset="0" stop-color="#c4ece6"/><stop offset="1" stop-color="#a6d8d2"/></linearGradient></defs>
<rect width="100" height="100" fill="#d0e8e4"/>
<polygon points="33,0 100,0 100,9 80,12 62,16 46,13 38,5" fill="#8e7658"/>
<polygon points="46,13 62,16 80,12 100,9 100,34 47,36" fill="#ebe8e2"/>
<ellipse cx="52" cy="14" rx="8" ry="4" fill="#f6f6f4"/>
<polygon points="47,24 60,22 74,31 47,33" fill="#a08468"/>
<ellipse cx="91" cy="19" rx="10" ry="5.5" fill="#e4eaec" stroke="#7a6a5a" stroke-width="1.2"/>
<rect x="47" y="33" width="53" height="30" fill="#cfe7e3"/>
<rect x="76" y="36" width="24" height="26" fill="#dcefed"/>
<rect x="52" y="44" width="7" height="19" fill="#5a3a2a"/>
<rect x="51" y="41" width="9" height="4" fill="#d8b070"/>
<path d="M0 0 H40 Q44 30 47 60 L47 62 L0 70Z" fill="url(#wA)"/>
<polygon points="0,72 12,69 26,67 38,64 44,60 47,60 47,75 28,78 0,86" fill="#ec7424"/>
<rect x="47" y="61" width="53" height="14" fill="#ece4d6"/>
<rect x="47" y="61" width="53" height="2" fill="#f0c040"/>
<polygon points="0,86 47,75 100,78 100,100 0,100" fill="#7aa2cc"/>
<polygon points="0,85 47,74 100,77 100,80 47,77 0,89" fill="#48c040"/>
<rect x="72" y="69" width="5" height="8" fill="#58b848"/>
<rect x="94" y="68" width="6" height="10" fill="#e8c020"/>
<ellipse cx="57" cy="84" rx="12" ry="4.5" fill="#3a44b8"/>
<ellipse cx="55" cy="83" rx="6" ry="2.5" fill="#4aa050"/>
<ellipse cx="90" cy="83" rx="4.5" ry="4" fill="#f0d030"/>
<polygon points="94,98 100,92 100,100 92,100" fill="#50c040"/>
<path d="M2 53 L8 49 L14 52 L9 58Z" fill="#d04838"/>
<polygon points="19,55 21,59 25,60 22,62 23,66 19,64 16,66 17,62 14,60 18,59" fill="#3a3040"/>
<path d="M20 44 Q24 36 30 40 Q38 38 34 46 Q32 52 26 50 Q20 52 20 44Z" fill="none" stroke="#e4508a" stroke-width="2.6" stroke-dasharray="3 1.5"/>
<circle cx="6" cy="35" r="1.5" fill="#404050"/><polygon points="31,51 34,53 32,56 29,54" fill="#405060"/><polygon points="41,50 44,52 42,56 39,53" fill="#506070"/>
<circle cx="8" cy="20" r="6" fill="#dcf4f2" opacity=".6"/><circle cx="33" cy="27" r="5" fill="#dcf4f2" opacity=".6"/>
</svg></span>
<span class="c" style="left:748px">商品分类3</span>
<span class="c" style="left:829px">品牌3</span>
<span class="c date" style="left:910px">2024-12-1<br>1</span>
<span class="c" style="left:991px">生产厂家3</span>
<span class="c" style="left:1072px">3</span>
<span class="c" style="left:1153px">99</span>
<span class="c" style="left:1234px">0</span>
<span class="c" style="left:1315px">99.9</span>
<svg class="share" style="left:1397px;top:53px" width="12" height="11" viewBox="0 0 12 11"><path d="M10 1.8L2.5 5.5 10 9.2" stroke="#333" stroke-width="1.6" fill="none"/><circle cx="10" cy="1.8" r="1.8" fill="#333"/><circle cx="2.2" cy="5.5" r="1.9" fill="#333"/><circle cx="10" cy="9.2" r="1.8" fill="#333"/></svg>
<span class="tg" style="left:1420px;top:48px"><i></i></span>
<span class="c" style="left:1477px">3</span>
<span class="btn teal" style="left:1558px;top:23px;width:54px"><svg class="ico" width="12" height="12" viewBox="0 0 12 12"><path d="M4.5 0h3v4.5H12v3H7.5V12h-3V7.5H0v-3h4.5z" fill="#fff"/></svg>查看</span>
<span class="btn outl" style="left:1621px;top:22px;width:85px"><svg class="ico" width="14" height="13" viewBox="0 0 14 13"><path d="M7 12C2 8 .8 6 .8 4A3 3 0 0 1 7 2.5 3 3 0 0 1 13.2 4c0 2-1.2 4-6.2 8z" stroke="#9a9a9a" stroke-width="1.1" fill="none"/></svg>商品入库</span>
<span class="btn green" style="left:1711px;top:23px;width:56px"><svg class="ico" width="14" height="14" viewBox="0 0 14 14"><path d="M7 1.5H1.5v11h11V7M5.5 8.5l.4-2L11.5 1l1.5 1.5-5.6 5.6z" stroke="#fff" stroke-width="1.2" fill="none"/></svg>修改</span>
<span class="btn teal" style="left:1558px;top:60px;width:82px"><svg class="ico" width="12" height="12" viewBox="0 0 12 12"><path d="M4.5 0h3v4.5H12v3H7.5V12h-3V7.5H0v-3h4.5z" fill="#fff"/></svg>查看评论</span>
<span class="btn red" style="left:1645px;top:60px;width:56px"><svg class="ico" width="12" height="13" viewBox="0 0 12 13"><path d="M.6 3.3h10.8M3.4 3.2V1.7Q6 .5 8.6 1.7v1.5" stroke="#f8cdc6" stroke-width="1.4" fill="none"/><path d="M1.9 3.6l.7 8.6h6.8l.7-8.6" stroke="#f8cdc6" stroke-width="1.3" fill="none"/><path d="M4.7 5.6v4.6M7.3 5.6v4.6" stroke="#f8cdc6" stroke-width="1.1"/></svg>删除</span>
<div class="bd"></div>
</div>
</div>
<div class="vline"></div>
<svg class="cursor" width="20" height="26" viewBox="0 0 20 26"><path d="M6.5 1.5c1 0 1.7.8 1.7 1.7v8.3l.3-.1V9.5c0-.9.7-1.6 1.6-1.6s1.6.7 1.6 1.6v1.3c.2-.7.8-1.1 1.5-1.1.9 0 1.6.7 1.6 1.6v1c.3-.5.8-.8 1.4-.8.9 0 1.6.7 1.6 1.6v5.6c0 3.6-2.6 6.3-6.2 6.3H10c-2 0-3.4-.8-4.6-2.3L1.6 17.4c-.6-.8-.4-1.9.4-2.4.7-.5 1.7-.4 2.3.3l.5.6V3.2c0-.9.8-1.7 1.7-1.7z" fill="#fff" stroke="#222" stroke-width="1.3"/><path d="M8.3 12v5M11.4 12v5M14.3 13v4" stroke="#222" stroke-width="1"/></svg>
<div class="sb"><div class="thumb"></div><svg class="sbup" width="8" height="4" viewBox="0 0 8 4"><path d="M0 4L4 0 8 4z" fill="#a3a3a3"/></svg><svg class="sbdn" width="8" height="4" viewBox="0 0 8 4"><path d="M0 0L4 4 8 0z" fill="#505050"/></svg></div>
</body></html>
